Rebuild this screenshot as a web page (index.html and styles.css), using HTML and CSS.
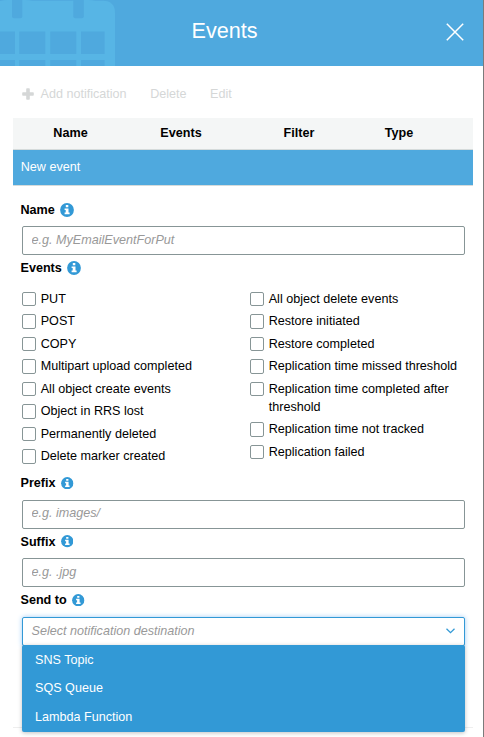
FILE: index.html
```html
<!DOCTYPE html>
<html lang="en">
<head>
<meta charset="utf-8">
<title>Events</title>
<link rel="stylesheet" href="styles.css">
</head>
<body>
<svg class="defs" aria-hidden="true">
  <symbol id="info" viewBox="0 0 14 14">
    <circle cx="7" cy="7" r="6.9" fill="#3299d6"/>
    <path d="M5.8 2.1h2.5v2.1H5.8zM4.6 5.4h3.9v4.2h1.1v1.7H4.6V9.6h1.1V7h-1.1z" fill="#fff"/>
  </symbol>
</svg>
<main class="panel">
  <header class="header">
    <svg class="calendar" width="116" height="66" viewBox="0 0 116 66">
      <path d="M0 1Q4 0 7 0H25Q30 0 32 .8H72Q75 0 79 0H88Q93 0 95 .8H103Q115 1 115 13V66H0Z" fill="#57b5e5"/>
      <g fill="#4fa9de">
        <rect x="12" y="-4" width="10.3" height="22.3" rx="2"/>
        <rect x="73.3" y="-4" width="10.5" height="22.3" rx="2"/>
        <path d="M0 31.5H15V54H0zM19.3 31.5H45.3V54H19.3zM50.3 31.5H76.3V54H50.3zM81 31.5H104.6V54H81zM0 60H15V66H0zM19.3 60H45.3V66H19.3zM50.3 60H76.3V66H50.3zM81 60H104.6V66H81z"/>
      </g>
    </svg>
    <h1 class="title">Events</h1>
    <svg class="close" width="18" height="18" viewBox="0 0 18 18"><path d="M.8.8 17.2 17.2M17.2.8.8 17.2" stroke="#fff" stroke-width="1.5"/></svg>
  </header>
  <nav class="toolbar">
    <span class="action"><svg class="plus" width="12" height="12" viewBox="0 0 12 12"><path d="M4.2 1Q4.2.2 5 .2H7Q7.8.2 7.8 1V4.2H11Q11.8 4.2 11.8 5V7Q11.8 7.8 11 7.8H7.8V11Q7.8 11.8 7 11.8H5Q4.2 11.8 4.2 11V7.8H1Q.2 7.8.2 7V5Q.2 4.2 1 4.2H4.2Z" fill="#d5d7d7"/></svg>Add notification</span>
    <span class="action">Delete</span>
    <span class="action">Edit</span>
  </nav>
  <section class="card">
    <div class="table-head"><span>Name</span><span>Events</span><span>Filter</span><span>Type</span></div>
    <div class="table-row">New event</div>
    <form class="form">
      <div class="label">Name<svg class="info"><use href="#info"/></svg></div>
      <input class="input" type="text" placeholder="e.g. MyEmailEventForPut">
      <div class="label">Events<svg class="info"><use href="#info"/></svg></div>
      <div class="events">
        <div class="column">
          <label class="check"><input type="checkbox" class="box">PUT</label>
          <label class="check"><input type="checkbox" class="box">POST</label>
          <label class="check"><input type="checkbox" class="box">COPY</label>
          <label class="check"><input type="checkbox" class="box">Multipart upload completed</label>
          <label class="check"><input type="checkbox" class="box">All object create events</label>
          <label class="check"><input type="checkbox" class="box">Object in RRS lost</label>
          <label class="check"><input type="checkbox" class="box">Permanently deleted</label>
          <label class="check"><input type="checkbox" class="box">Delete marker created</label>
        </div>
        <div class="column">
          <label class="check"><input type="checkbox" class="box">All object delete events</label>
          <label class="check"><input type="checkbox" class="box">Restore initiated</label>
          <label class="check"><input type="checkbox" class="box">Restore completed</label>
          <label class="check"><input type="checkbox" class="box">Replication time missed threshold</label>
          <label class="check"><input type="checkbox" class="box">Replication time completed after threshold</label>
          <label class="check"><input type="checkbox" class="box">Replication time not tracked</label>
          <label class="check"><input type="checkbox" class="box">Replication failed</label>
        </div>
      </div>
      <div class="label">Prefix<svg class="info small"><use href="#info"/></svg></div>
      <input class="input" type="text" placeholder="e.g. images/">
      <div class="label">Suffix<svg class="info small"><use href="#info"/></svg></div>
      <input class="input" type="text" placeholder="e.g. .jpg">
      <div class="label">Send to<svg class="info small"><use href="#info"/></svg></div>
      <div class="select">
        <div class="select-value">Select notification destination<svg width="9" height="6" viewBox="0 0 9 6"><path d="M.5.8 4.5 4.6 8.5.8" fill="none" stroke="#3299d6" stroke-width="1.3"/></svg></div>
        <div class="menu">
          <div class="option">SNS Topic</div>
          <div class="option">SQS Queue</div>
          <div class="option">Lambda Function</div>
        </div>
      </div>
    </form>
  </section>
</main>
</body>
</html>
```
FILE: styles.css
```css
* { box-sizing: border-box; }
html, body { margin: 0; height: 737px; overflow: hidden; }
body { background: #fff; color: #000; font: 12.6px/18px "Liberation Sans", Arial, sans-serif; }
.defs { display: block; width: 0; height: 0; }
.panel { height: 737px; border-right: 1px solid #7b7b7b; }
.header {
  display: grid; grid-template-columns: 116px 1fr 116px; align-items: start;
  height: 66px; background: #4fa9de; color: #fff;
}
.calendar { display: block; }
.title { margin: 17px 0 0; padding-right: 34px; font-size: 21.6px; font-weight: 400; line-height: 27px; text-align: center; }
.close { justify-self: end; margin: 23px 19px 0 0; }
.toolbar { display: flex; gap: 23.5px; height: 52px; padding: 19px 0 0 22px; color: #d5d7d7; }
.action { display: flex; height: 18px; align-items: center; }
.plus { margin-right: 6.5px; }
.card { width: 460px; height: 610px; margin-left: 13px; border-bottom: 1px solid #eee; }
.table-head {
  display: grid; grid-template-columns: 115px 106px 130px 1fr; height: 32px;
  border-bottom: 1px solid #d5dbdb; background: #f4f6f6;
  font-weight: 700; line-height: 30px; text-align: center;
}
.table-head span:last-child { padding-right: 39px; }
.table-row { height: 36px; padding-left: 7.7px; border-bottom: 1px solid #d5dbdb; background: #4fa9de; color: #fff; line-height: 34px; }
.form { padding: 14.5px 8px 0 9px; }
.label { display: flex; align-items: center; height: 18px; margin-left: -1.5px; font-weight: 700; }
.info { width: 14px; height: 14px; margin-left: 5px; }
.info.small { width: 12.5px; height: 12.5px; margin-left: 5.5px; }
.input {
  display: block; width: 443px; height: 29px; margin: 7.5px 0 4px; padding: 0 8.5px 2px;
  border: 1px solid #879596; border-radius: 2px; background: #fff; font: inherit; outline: 0;
}
.input::placeholder { color: #999; font-style: italic; opacity: 1; }
.events { display: grid; grid-template-columns: 228px 215px; margin: 12.5px 0 9.2px; }
.column { display: flex; flex-direction: column; gap: 4.5px; }
.check { display: flex; align-items: flex-start; gap: 4.7px; }
.box { flex: none; appearance: none; width: 14px; height: 14.4px; margin: 2.3px 0 0; border: 1px solid #879596; border-radius: 2px; background: #fff; }
.select { position: relative; margin-top: 7.5px; }
.select-value {
  display: flex; align-items: center; justify-content: space-between; height: 29px; padding: 0 9px 1px 8.5px;
  border: 1px solid #3299d6; border-radius: 2px; background: #fff; box-shadow: 0 0 5px #9ecbf5;
  color: #999; font-style: italic;
}
.menu {
  position: absolute; top: 28px; left: 0; width: 443px; height: 87px;
  border-radius: 2px; background: #3299d6; box-shadow: 0 1px 4px rgba(0,0,0,.25); color: #fff;
}
.option { height: 28.6px; padding-left: 13px; line-height: 30px; }
```
